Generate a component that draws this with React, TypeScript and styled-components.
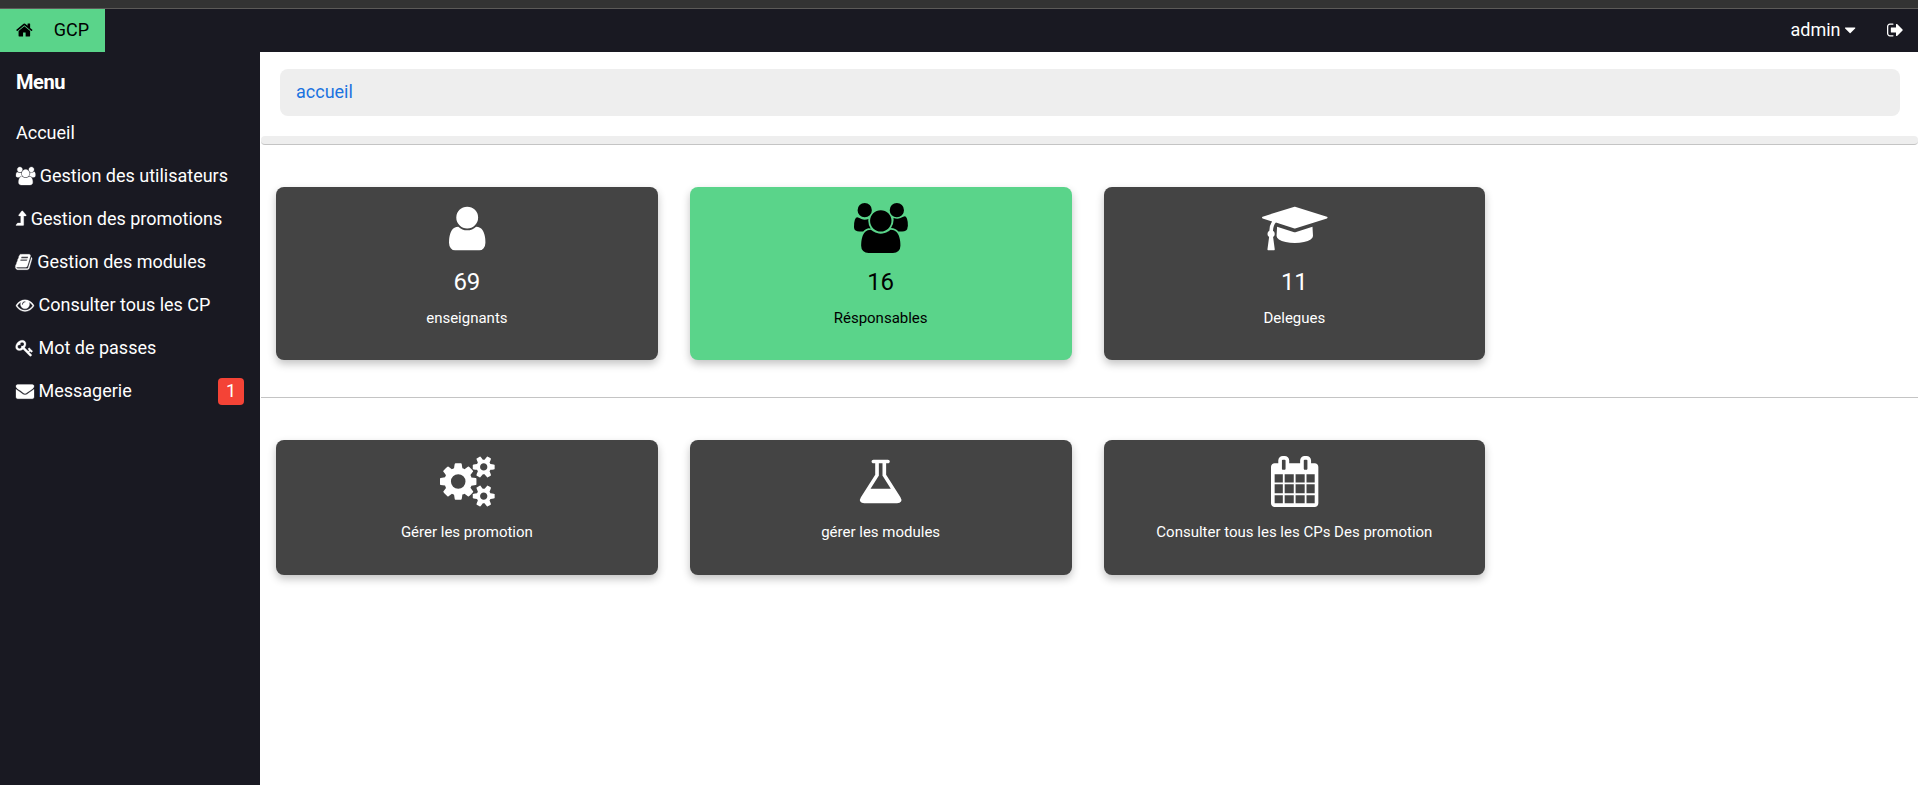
import React from "react";
import styled, { createGlobalStyle } from "styled-components";

const GlobalStyle = createGlobalStyle`
  *, *::before, *::after { box-sizing: border-box; }
  body {
    margin: 0;
    background: #fff;
    font-family: Roboto, "Liberation Sans", sans-serif;
    font-size: 18px;
    line-height: 1.5;
  }
`;

type Glyph = { x: number; w: number; d: string };

const glyphs: Record<string, Glyph> = {
  home: { x: 64, w: 1664, d: "M1472 992v480q0 26-19 45t-45 19h-384v-384h-256v384h-384q-26 0-45-19t-19-45v-480q0-1 .5-3t.5-3l575-474 575 474q1 2 1 6zm223-69l-62 74q-8 9-21 11h-3q-13 0-21-7l-692-577-692 577q-12 8-24 7-13-2-21-11l-62-74q-8-10-7-23.5t11-21.5l719-599q32-26 76-26t76 26l244 204v-195q0-14 9-23t23-9h192q14 0 23 9t9 23v408l219 182q10 8 11 21.5t-7 23.5z" },
  signOut: { x: 64, w: 1664, d: "M704 1440q0 4 1 20t.5 26.5-3 23.5-10 19.5-20.5 6.5h-320q-119 0-203.5-84.5t-84.5-203.5v-704q0-119 84.5-203.5t203.5-84.5h320q13 0 22.5 9.5t9.5 22.5q0 4 1 20t.5 26.5-3 23.5-10 19.5-20.5 6.5h-320q-66 0-113 47t-47 113v704q0 66 47 113t113 47h312l11.5 1 11.5 3 8 5.5 7 9 2 13.5zm928-544q0 26-19 45l-544 544q-19 19-45 19t-45-19-19-45v-288h-448q-26 0-45-19t-19-45v-384q0-26 19-45t45-19h448v-288q0-26 19-45t45-19 45 19l544 544q19 19 19 45z" },
  caret: { x: 384, w: 1024, d: "M1408 704q0 26-19 45l-448 448q-19 19-45 19t-45-19l-448-448q-19-19-19-45t19-45 45-19h896q26 0 45 19t19 45z" },
  user: { x: 256, w: 1280, d: "M1536 1399q0 109-62.5 187t-150.5 78h-854q-88 0-150.5-78t-62.5-187q0-85 8.5-160.5t31.5-152 58.5-131 94-89 134.5-34.5q131 128 313 128t313-128q76 0 134.5 34.5t94 89 58.5 131 31.5 152 8.5 160.5zm-256-887q0 159-112.5 271.5t-271.5 112.5-271.5-112.5-112.5-271.5 112.5-271.5 271.5-112.5 271.5 112.5 112.5 271.5z" },
  users: { x: 64, w: 1920, d: "M657 896q-162 5-265 128h-134q-82 0-138-40.5t-56-118.5q0-353 124-353 6 0 43.5 21t97.5 42.5 119 21.5q67 0 133-23-5 37-5 66 0 159 93 293zm1071 637q0 120-73 189.5t-194 69.5h-874q-121 0-194-69.5t-73-189.5q0-53 3.5-103.5t14-109 26.5-108.5 43-97.5 62-81 85.5-53.5 111.5-20q10 0 43 21.5t73 48 107 48 135 21.5 135-21.5 107-48 73-48 43-21.5q61 0 111.5 20t85.5 53.5 62 81 43 97.5 26.5 108.5 14 109 3.5 103.5zm-1024-1277q0 106-75 181t-181 75-181-75-75-181 75-181 181-75 181 75 75 181zm704 384q0 159-112.5 271.5t-271.5 112.5-271.5-112.5-112.5-271.5 112.5-271.5 271.5-112.5 271.5 112.5 112.5 271.5zm576 225q0 78-56 118.5t-138 40.5h-134q-103-123-265-128 93-134 93-293 0-29-5-66 66 23 133 23 59 0 119-21.5t97.5-42.5 43.5-21q124 0 124 353zm-128-609q0 106-75 181t-181 75-181-75-75-181 75-181 181-75 181 75 75 181z" },
  cap: { x: 0, w: 2304, d: "M1774 836l18 316q4 69-82 128t-235 93.5-323 34.5-323-34.5-235-93.5-82-128l18-316 574 181q22 7 48 7t48-7zm530-324q0 23-22 31l-1120 352q-4 1-10 1t-10-1l-652-206q-43 34-71 111.5t-34 178.5q63 36 63 109 0 69-58 107l58 433q2 14-8 25-9 11-24 11h-192q-15 0-24-11-10-11-8-25l58-433q-58-38-58-107 0-73 65-111 11-207 98-330l-333-104q-22-8-22-31t22-31l1120-352q4-1 10-1t10 1l1120 352q22 8 22 31z" },
  cogs: { x: 0, w: 1920, d: "M896 896q0-106-75-181t-181-75-181 75-75 181 75 181 181 75 181-75 75-181zm768 512q0-52-38-90t-90-38-90 38-38 90q0 53 37.5 90.5t90.5 37.5 90.5-37.5 37.5-90.5zm0-1024q0-52-38-90t-90-38-90 38-38 90q0 53 37.5 90.5t90.5 37.5 90.5-37.5 37.5-90.5zm-384 421v185q0 10-7 19.5t-16 10.5l-155 24q-11 35-32 76 34 48 90 115 7 11 7 20 0 12-7 19-23 30-82.5 89.5t-78.5 59.5q-11 0-21-7l-115-90q-37 19-77 31-11 108-23 155-7 24-30 24h-186q-11 0-20-7.5t-10-17.5l-23-153q-34-10-75-31l-118 89q-7 7-20 7-11 0-21-8-144-133-144-160 0-9 7-19 10-14 41-53t47-61q-23-44-35-82l-152-24q-10-1-17-9.5t-7-19.5v-185q0-10 7-19.5t16-10.5l155-24q11-35 32-76-34-48-90-115-7-11-7-20 0-12 7-20 22-30 82-89t79-59q11 0 21 7l115 90q34-18 77-32 11-108 23-154 7-24 30-24h186q11 0 20 7.5t10 17.5l23 153q34 10 75 31l118-89q8-7 20-7 11 0 21 8 144 133 144 160 0 8-7 19-12 16-42 54t-45 60q23 48 34 82l152 23q10 2 17 10.5t7 19.5zm640 533v140q0 16-149 31-12 27-30 52 51 113 51 138 0 4-4 7-122 71-124 71-8 0-46-47t-52-68q-20 2-30 2t-30-2q-14 21-52 68t-46 47q-2 0-124-71-4-3-4-7 0-25 51-138-18-25-30-52-149-15-149-31v-140q0-16 149-31 13-29 30-52-51-113-51-138 0-4 4-7 4-2 35-20t59-34 30-16q8 0 46 46.5t52 67.5q20-2 30-2t30 2q51-71 92-112l6-2q4 0 124 70 4 3 4 7 0 25-51 138 17 23 30 52 149 15 149 31zm0-1024v140q0 16-149 31-12 27-30 52 51 113 51 138 0 4-4 7-122 71-124 71-8 0-46-47t-52-68q-20 2-30 2t-30-2q-14 21-52 68t-46 47q-2 0-124-71-4-3-4-7 0-25 51-138-18-25-30-52-149-15-149-31v-140q0-16 149-31 13-29 30-52-51-113-51-138 0-4 4-7 4-2 35-20t59-34 30-16q8 0 46 46.5t52 67.5q20-2 30-2t30 2q51-71 92-112l6-2q4 0 124 70 4 3 4 7 0 25-51 138 17 23 30 52 149 15 149 31z" },
  flask: { x: 64, w: 1664, d: "M1591 1448q56 89 21.5 152.5t-140.5 63.5h-1152q-106 0-140.5-63.5t21.5-152.5l503-793v-399h-64q-26 0-45-19t-19-45 19-45 45-19h512q26 0 45 19t19 45-19 45-45 19h-64v399zm-779-725l-272 429h712l-272-429-20-31v-436h-128v436z" },
  calendar: { x: 64, w: 1664, d: "M192 1664h288v-288h-288v288zm352 0h320v-288h-320v288zm-352-352h288v-320h-288v320zm352 0h320v-320h-320v320zm-352-384h288v-288h-288v288zm736 736h320v-288h-320v288zm-384-736h320v-288h-320v288zm768 736h288v-288h-288v288zm-384-352h320v-320h-320v320zm-352-864v-288q0-13-9.5-22.5t-22.5-9.5h-64q-13 0-22.5 9.5t-9.5 22.5v288q0 13 9.5 22.5t22.5 9.5h64q13 0 22.5-9.5t9.5-22.5zm736 864h288v-320h-288v320zm-384-384h320v-288h-320v288zm384 0h288v-288h-288v288zm32-480v-288q0-13-9.5-22.5t-22.5-9.5h-64q-13 0-22.5 9.5t-9.5 22.5v288q0 13 9.5 22.5t22.5 9.5h64q13 0 22.5-9.5t9.5-22.5zm384-64v1280q0 52-38 90t-90 38h-1408q-52 0-90-38t-38-90v-1280q0-52 38-90t90-38h128v-96q0-66 47-113t113-47h64q66 0 113 47t47 113v96h384v-96q0-66 47-113t113-47h64q66 0 113 47t47 113v96h128q52 0 90 38t38 90z" },
  levelUp: { x: 0, w: 1024, d: "M1018 557q-17 35-58 35h-192v896q0 48-48 48h-704q-14 0-22-14-7-16 3-28l160-192q8-10 25-10h290v-700h-152q-41 0-58-35-17-37 9-68l300-384q18-22 49-22t49 22l340 384q27 31 9 68z" },
  book: { x: 64, w: 1664, d: "M1639 478q40 57 18 129l-275 906q-19 64-76.5 107.5t-122.5 43.5h-923q-77 0-148.5-53.5t-99.5-131.5q-24-67-2-127 0-4 3-27t4-37q1-8-3-21.5t-3-19.5q2-11 8-21t16.5-23.5 16.5-23.5q23-38 45-91.5t30-91.5q3-10 .5-30t-.5-28q3-11 17-28t17-23q21-36 42-92t25-90q1-9-2.5-32t.5-28q4-13 22-30.5t22-22.5q19-26 42.5-84.5t27.5-96.5q1-8-3-25.5t-2-26.5q2-8 9-18t18-23 17-21q8-12 16.5-30.5t15-35 16-36 19.5-32 26.5-23.5 36-11.5 47.5 5.5l-1 3q38-9 51-9h761q74 0 114 56t18 130l-274 906q-36 119-71.5 153.5t-128.5 34.5h-869q-27 0-38 15-11 16-1 43 24 70 144 70h923q29 0 56-15.5t35-41.5l300-987q7-22 5-57 38 15 59 43zm-1064 2q-4 13 2 22.5t20 9.5h608q13 0 25.5-9.5t16.5-22.5l21-64q4-13-2-22.5t-20-9.5h-608q-13 0-25.5 9.5t-16.5 22.5zm-83 256q-4 13 2 22.5t20 9.5h608q13 0 25.5-9.5t16.5-22.5l21-64q4-13-2-22.5t-20-9.5h-608q-13 0-25.5 9.5t-16.5 22.5z" },
  eye: { x: 0, w: 1792, d: "M1664 960q-152-236-381-353 61 104 61 225 0 185-131.5 316.5t-316.5 131.5-316.5-131.5-131.5-316.5q0-121 61-225-229 117-381 353 133 205 333.5 326.5t434.5 121.5 434.5-121.5 333.5-326.5zm-720-384q0-20-14-34t-34-14q-125 0-214.5 89.5t-89.5 214.5q0 20 14 34t34 14 34-14 14-34q0-86 61-147t147-61q20 0 34-14t14-34zm848 384q0 34-20 69-140 230-376.5 368.5t-499.5 138.5-499.5-139-376.5-368q-20-35-20-69t20-69q140-229 376.5-368t499.5-139 499.5 139 376.5 368q20 35 20 69z" },
  key: { x: 32, w: 1792, d: "M832 512q0-80-56-136t-136-56-136 56-56 136q0 42 19 83-41-19-83-19-80 0-136 56t-56 136 56 136 136 56 136-56 56-136q0-42-19-83 41 19 83 19 80 0 136-56t56-136zm851 704q0 17-49 66t-66 49q-9 0-28.5-16t-36.5-33-38.5-40-24.5-26l-96 96 220 220q28 28 28 68 0 42-39 81t-81 39q-40 0-68-28l-671-671q-176 131-365 131-163 0-265.5-102.5t-102.5-265.5q0-160 95-313t248-248 313-95q163 0 265.5 102.5t102.5 265.5q0 189-131 365l355 355 96-96q-3-3-26-24.5t-40-38.5-33-36.5-16-28.5q0-17 49-66t66-49q13 0 23 10 6 6 46 44.5t82 79.5 86.5 86 73 78 28.5 41z" },
  envelope: { x: 0, w: 1792, d: "M1792 710v794q0 66-47 113t-113 47h-1472q-66 0-113-47t-47-113v-794q44 49 101 87 362 246 497 345 57 42 92.5 65.5t94.5 48 110 24.5h2q51 0 110-24.5t94.5-48 92.5-65.5q170-123 498-345 57-39 100-87zm0-294q0 79-49 151t-122 123q-376 261-468 325-10 7-42.5 31t-54 38.5-52 32.5-57.5 27-50 9h-2q-23 0-50-9t-57.5-27-52-32.5-54-38.5-42.5-31q-91-64-262-182.5t-205-142.5q-62-42-117-115.5t-55-136.5q0-78 41.5-130t118.5-52h1472q65 0 112.5 47t47.5 113z" },
};

const Svg = styled.svg<{ $ratio: number }>`
  display: inline-block;
  width: ${(p) => p.$ratio}em;
  height: 1em;
  vertical-align: -0.143em;
  overflow: visible;
  fill: currentColor;
`;

function Icon({ name }: { name: string }) {
  const g = glyphs[name];
  return (
    <Svg $ratio={g.w / 1792} viewBox={`${g.x} 0 ${g.w} 1792`} aria-hidden="true">
      <path d={g.d} />
    </Svg>
  );
}

const Page = styled.div`
  display: flex;
  flex-direction: column;
  height: 785px;
  overflow: hidden;
`;

const WindowEdge = styled.div`
  flex: none;
  height: 9px;
  background: #333;
  border-bottom: 1px solid #5c5a58;
`;

const TopBar = styled.header`
  flex: none;
  display: flex;
  justify-content: space-between;
  height: 43px;
  background: #191922;
  color: #fff;
`;

const Brand = styled.a`
  display: flex;
  align-items: center;
  gap: 21px;
  width: 105px;
  padding: 0 16px 2px;
  background: #5ad48a;
  color: #000;
`;

const Account = styled.div`
  display: flex;
`;

const BarButton = styled.a`
  padding: 7px 14px 9px 16px;
  white-space: nowrap;

  & + & {
    padding-left: 18px;
  }
`;

const Body = styled.div`
  flex: 1;
  display: flex;
  min-height: 0;
`;

const Sidebar = styled.nav`
  flex: none;
  width: 260px;
  background: #191922;
  color: #fff;
`;

const MenuTitle = styled.h4`
  margin: 0;
  padding: 15px 16px 14px;
  font-size: 20px;
  font-weight: 700;
  letter-spacing: -0.4px;
  line-height: 30px;
`;

const MenuItem = styled.a`
  display: flex;
  justify-content: space-between;
  padding: 8px 16px;
  line-height: 27px;
  white-space: nowrap;

  svg {
    stroke: currentColor;
    stroke-width: 28px;
  }
`;

const Badge = styled.span`
  width: 26px;
  height: 27px;
  margin: 1px 0 -1px;
  border-radius: 4px;
  background: #f44336;
  text-align: center;
  line-height: 26px;
`;

const Main = styled.main`
  flex: 1;
  min-width: 0;
  padding-top: 17px;
`;

const Breadcrumb = styled.div`
  height: 47px;
  margin: 0 18px 20px 20px;
  padding: 9px 16px;
  border-radius: 8px;
  background: #eee;
  color: #1b73e0;
`;

const Band = styled.div`
  height: 9px;
  margin-left: 1px;
  background: #eee;
  border-bottom: 1px solid #c4c4c4;
  border-radius: 4px;
`;

const Divider = styled.div`
  height: 1px;
  margin-left: 1px;
  background: #c4c4c4;
`;

const CardRow = styled.section<{ $height: number }>`
  display: grid;
  grid-template-columns: repeat(4, 381.75px);
  column-gap: 32px;
  height: ${(p) => p.$height}px;
  margin: 42px 0 37px 16px;
`;

const Card = styled.article<{ $accent?: boolean }>`
  display: flex;
  flex-direction: column;
  align-items: center;
  padding-top: 16px;
  border-radius: 8px;
  background: ${(p) => (p.$accent ? "#5ad48a" : "#444")};
  color: ${(p) => (p.$accent ? "#000" : "#fff")};
  box-shadow: 0 4px 8px 0 rgba(0, 0, 0, 0.24);
`;

const CardIcon = styled.div<{ $size?: number }>`
  display: flex;
  height: 51px;
  font-size: ${(p) => p.$size ?? 51}px;
  line-height: 1;
`;

const CardNumber = styled.div`
  margin-top: 10px;
  font-size: 24px;
  line-height: 36px;
`;

const CardLabel = styled.div<{ $afterIcon?: boolean }>`
  margin-top: ${(p) => (p.$afterIcon ? 14 : 7)}px;
  font-size: 15px;
  line-height: 23px;
`;

const menu = [
  { label: "Accueil" },
  { icon: "users", label: "Gestion des utilisateurs" },
  { icon: "levelUp", label: "Gestion des promotions" },
  { icon: "book", label: "Gestion des modules" },
  { icon: "eye", label: "Consulter tous les CP" },
  { icon: "key", label: "Mot de passes" },
  { icon: "envelope", label: "Messagerie", badge: 1 },
];

const stats = [
  { icon: "user", value: 69, label: "enseignants" },
  { icon: "users", value: 16, label: "Résponsables", accent: true, size: 50 },
  { icon: "cap", value: 11, label: "Delegues" },
];

const actions = [
  { icon: "cogs", label: "Gérer les promotion" },
  { icon: "flask", label: "gérer les modules" },
  { icon: "calendar", label: "Consulter tous les les CPs Des promotion" },
];

export default function App() {
  return (
    <Page>
      <GlobalStyle />
      <WindowEdge />
      <TopBar>
        <Brand>
          <Icon name="home" />
          <span>GCP</span>
        </Brand>
        <Account>
          <BarButton>
            admin <Icon name="caret" />
          </BarButton>
          <BarButton>
            <Icon name="signOut" />
          </BarButton>
        </Account>
      </TopBar>
      <Body>
        <Sidebar>
          <MenuTitle>Menu</MenuTitle>
          {menu.map((m) => (
            <MenuItem key={m.label}>
              <span>
                {m.icon && <Icon name={m.icon} />} {m.label}
              </span>
              {m.badge && <Badge>{m.badge}</Badge>}
            </MenuItem>
          ))}
        </Sidebar>
        <Main>
          <Breadcrumb>accueil</Breadcrumb>
          <Band />
          <CardRow $height={173}>
            {stats.map((s) => (
              <Card key={s.label} $accent={s.accent}>
                <CardIcon $size={s.size}>
                  <Icon name={s.icon} />
                </CardIcon>
                <CardNumber>{s.value}</CardNumber>
                <CardLabel>{s.label}</CardLabel>
              </Card>
            ))}
          </CardRow>
          <Divider />
          <CardRow $height={135}>
            {actions.map((a) => (
              <Card key={a.label}>
                <CardIcon>
                  <Icon name={a.icon} />
                </CardIcon>
                <CardLabel $afterIcon>{a.label}</CardLabel>
              </Card>
            ))}
          </CardRow>
        </Main>
      </Body>
    </Page>
  );
}
